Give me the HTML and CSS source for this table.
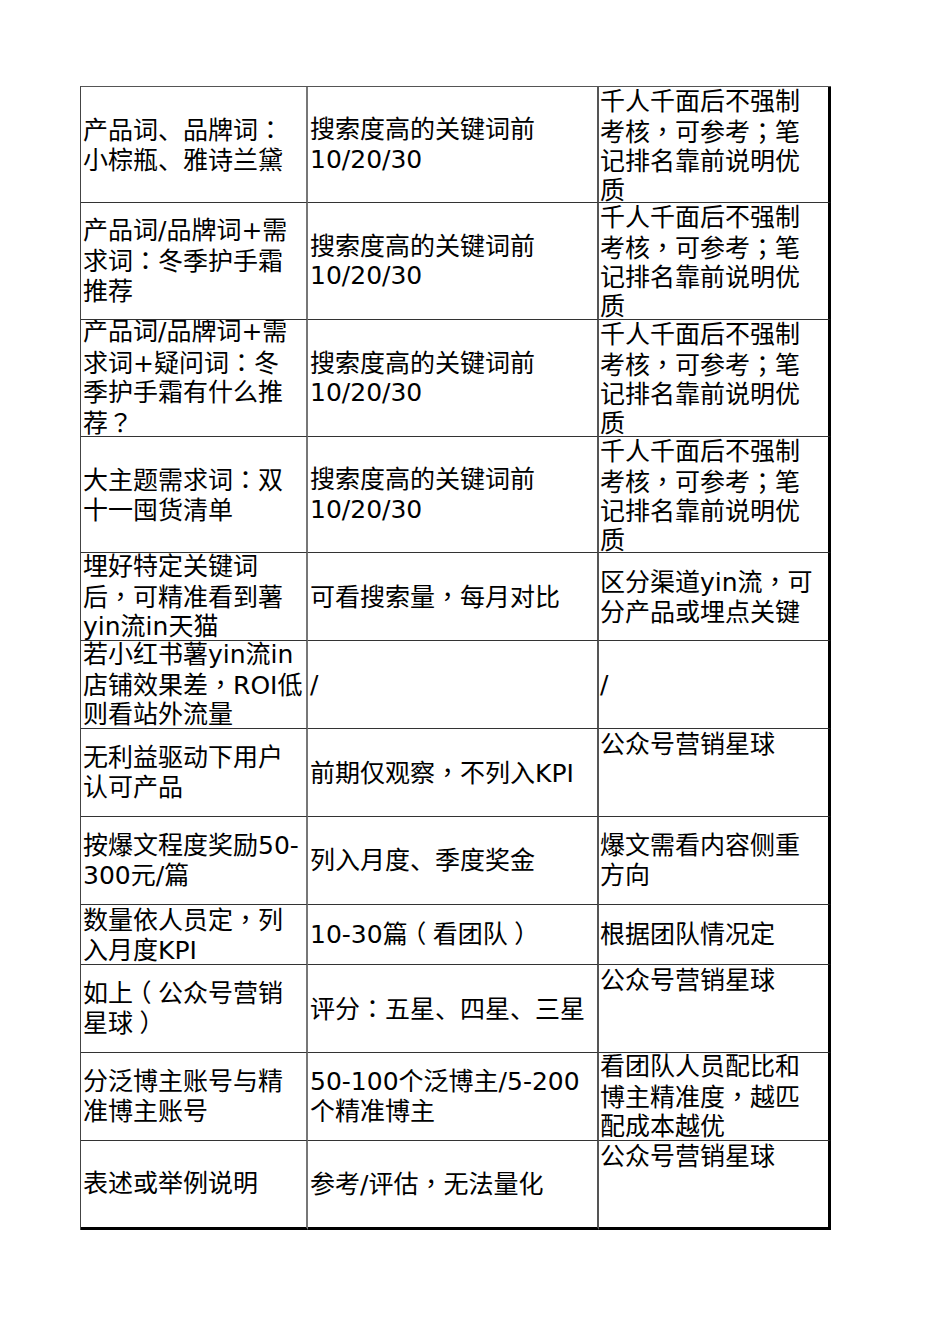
FILE: index.html
```html
<!DOCTYPE html>
<html lang="zh-CN">
<head>
<meta charset="utf-8">
<title>关键词考核表</title>
<link rel="stylesheet" href="styles.css">
</head>
<body>
<div class="sheet">
  <div class="cell c1 r-a"><p class="tx">产品词、品牌词<span class="pc" lang="zh-TW">：</span><br>小棕瓶、雅诗兰黛</p></div>
  <div class="cell c2 r-a"><p class="tx">搜索度高的关键词前<br>10/20/30</p></div>
  <div class="cell c3 r-a top full"><p class="tx">千人千面后不强制<br>考核<span class="pc" lang="zh-TW">，</span>可参考<span class="pc" lang="zh-TW">；</span>笔<br>记排名靠前说明优<br>质</p></div>

  <div class="cell c1 r-b"><p class="tx">产品词/品牌词+需<br>求词<span class="pc" lang="zh-TW">：</span>冬季护手霜<br>推荐</p></div>
  <div class="cell c2 r-b"><p class="tx">搜索度高的关键词前<br>10/20/30</p></div>
  <div class="cell c3 r-b top full"><p class="tx">千人千面后不强制<br>考核<span class="pc" lang="zh-TW">，</span>可参考<span class="pc" lang="zh-TW">；</span>笔<br>记排名靠前说明优<br>质</p></div>

  <div class="cell c1 r-b"><p class="tx">产品词/品牌词+需<br>求词+疑问词<span class="pc" lang="zh-TW">：</span>冬<br>季护手霜有什么推<br>荐<span class="pc" lang="zh-TW">？</span></p></div>
  <div class="cell c2 r-b"><p class="tx">搜索度高的关键词前<br>10/20/30</p></div>
  <div class="cell c3 r-b top full"><p class="tx">千人千面后不强制<br>考核<span class="pc" lang="zh-TW">，</span>可参考<span class="pc" lang="zh-TW">；</span>笔<br>记排名靠前说明优<br>质</p></div>

  <div class="cell c1 r-a"><p class="tx">大主题需求词<span class="pc" lang="zh-TW">：</span>双<br>十一囤货清单</p></div>
  <div class="cell c2 r-a"><p class="tx">搜索度高的关键词前<br>10/20/30</p></div>
  <div class="cell c3 r-a top full"><p class="tx">千人千面后不强制<br>考核<span class="pc" lang="zh-TW">，</span>可参考<span class="pc" lang="zh-TW">；</span>笔<br>记排名靠前说明优<br>质</p></div>

  <div class="cell c1 r-c"><p class="tx">埋好特定关键词<br>后<span class="pc" lang="zh-TW">，</span>可精准看到薯<br>yin流in天猫</p></div>
  <div class="cell c2 r-c"><p class="tx">可看搜索量<span class="pc" lang="zh-TW">，</span>每月对比</p></div>
  <div class="cell c3 r-c"><p class="tx">区分渠道yin流<span class="pc" lang="zh-TW">，</span>可<br>分产品或埋点关键</p></div>

  <div class="cell c1 r-c"><p class="tx">若小红书薯yin流in<br>店铺效果差<span class="pc" lang="zh-TW">，</span>ROI低<br>则看站外流量</p></div>
  <div class="cell c2 r-c"><p class="tx">/</p></div>
  <div class="cell c3 r-c"><p class="tx">/</p></div>

  <div class="cell c1 r-c"><p class="tx">无利益驱动下用户<br>认可产品</p></div>
  <div class="cell c2 r-c"><p class="tx">前期仅观察<span class="pc" lang="zh-TW">，</span>不列入KPI</p></div>
  <div class="cell c3 r-c top"><p class="tx">公众号营销星球</p></div>

  <div class="cell c1 r-c"><p class="tx">按爆文程度奖励50-<br>300元/篇</p></div>
  <div class="cell c2 r-c"><p class="tx">列入月度、季度奖金</p></div>
  <div class="cell c3 r-c"><p class="tx">爆文需看内容侧重<br>方向</p></div>

  <div class="cell c1 r-d"><p class="tx">数量依人员定<span class="pc" lang="zh-TW">，</span>列<br>入月度KPI</p></div>
  <div class="cell c2 r-d"><p class="tx">10-30篇<span class="po">（</span>看团队<span class="pe">）</span></p></div>
  <div class="cell c3 r-d"><p class="tx">根据团队情况定</p></div>

  <div class="cell c1 r-c"><p class="tx">如上<span class="po">（</span>公众号营销<br>星球<span class="pe">）</span></p></div>
  <div class="cell c2 r-c"><p class="tx">评分<span class="pc" lang="zh-TW">：</span>五星、四星、三星</p></div>
  <div class="cell c3 r-c top"><p class="tx">公众号营销星球</p></div>

  <div class="cell c1 r-c"><p class="tx">分泛博主账号与精<br>准博主账号</p></div>
  <div class="cell c2 r-c"><p class="tx">50-100个泛博主/5-200<br>个精准博主</p></div>
  <div class="cell c3 r-c"><p class="tx">看团队人员配比和<br>博主精准度<span class="pc" lang="zh-TW">，</span>越匹<br>配成本越优</p></div>

  <div class="cell c1 r-e"><p class="tx">表述或举例说明</p></div>
  <div class="cell c2 r-e"><p class="tx">参考/评估<span class="pc" lang="zh-TW">，</span>无法量化</p></div>
  <div class="cell c3 r-e top"><p class="tx">公众号营销星球</p></div>
</div>
</body>
</html>
```

FILE: styles.css
```css
html, body {
  margin: 0;
  padding: 0;
  background: #ffffff;
}

body {
  font-family: "DejaVu Sans", "Noto Sans CJK SC", sans-serif;
  color: #000000;
}

.sheet {
  display: grid;
  grid-template-columns: 227px 291px 232px;
  width: max-content;
  margin: 86px 0 0 80px;
  border-top: 1px solid #555555;
  border-left: 1px solid #444444;
}

.cell {
  box-sizing: border-box;
  display: flex;
  flex-direction: column;
  justify-content: center;
  overflow: hidden;
  white-space: nowrap;
  font-size: 25px;
  line-height: 29.3px;
  padding: 0 0 0 2px;
  border-bottom: 1px solid #333333;
}

.tx {
  margin: 0;
}

.pc {
  font-family: "Noto Sans CJK TC", "Noto Sans CJK SC", sans-serif;
}

/* full-width parentheses drawn centred in their em box */
.po {
  margin-left: -0.26em;
  margin-right: 0.26em;
}

.pe {
  margin-left: 0.26em;
  margin-right: -0.26em;
}

.c1 {
  border-right: 2px solid #777777;
}

.c2 {
  border-right: 2px solid #555555;
}

.c3 {
  border-right: 3px solid #000000;
  padding-left: 1px;
}

.top {
  justify-content: flex-start;
  padding-top: 1px;
}

.top.full {
  padding-top: 0;
  line-height: 29px;
}

.r-a { height: 116px; }
.r-b { height: 117px; }
.r-c { height: 88px; }
.r-d { height: 60px; }
.r-e {
  height: 89px;
  border-bottom: 3px solid #000000;
}
```
